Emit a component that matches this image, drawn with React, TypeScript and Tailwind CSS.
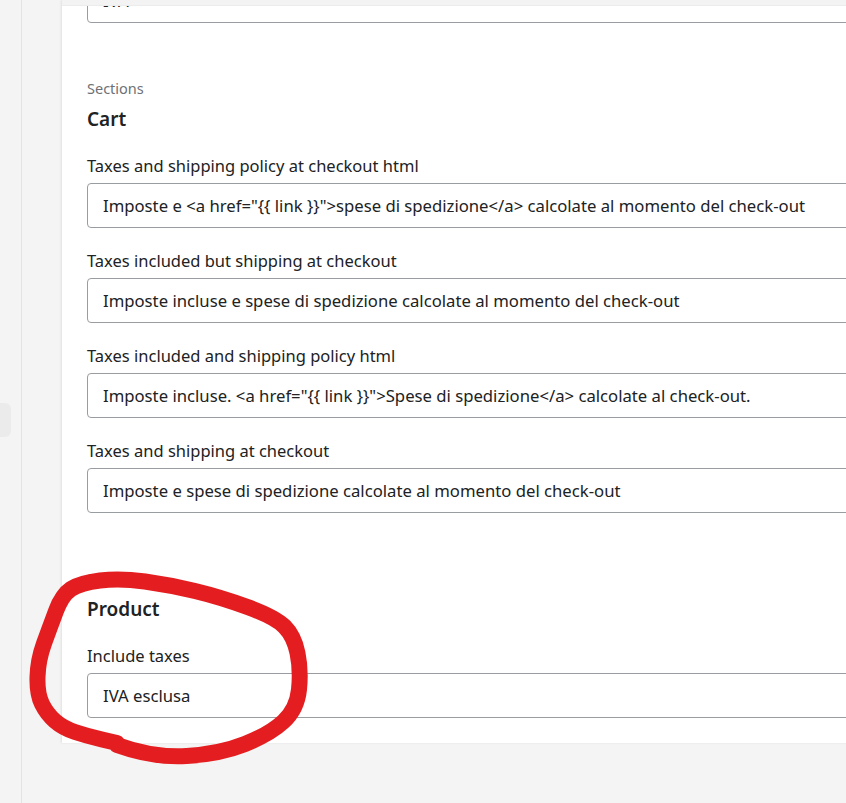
const font = { fontFamily: '"Noto Sans", "Open Sans", sans-serif' };

type Field = { label: string; value: string };

const cartFields: Field[] = [
  {
    label: "Taxes and shipping policy at checkout html",
    value: 'Imposte e <a href="{{ link }}">spese di spedizione</a> calcolate al momento del check-out',
  },
  {
    label: "Taxes included but shipping at checkout",
    value: "Imposte incluse e spese di spedizione calcolate al momento del check-out",
  },
  {
    label: "Taxes included and shipping policy html",
    value: 'Imposte incluse. <a href="{{ link }}">Spese di spedizione</a> calcolate al check-out.',
  },
  {
    label: "Taxes and shipping at checkout",
    value: "Imposte e spese di spedizione calcolate al momento del check-out",
  },
];

function TextField({ label, value }: Field) {
  return (
    <div className="flex flex-col gap-[5px]">
      <label className="h-6 leading-6 text-[16.5px] text-[#202223]">{label}</label>
      <div className="h-[45px] flex items-center pl-[15px] border border-[#999ca0] rounded-[4px] text-[16.7px] text-[#202223] whitespace-nowrap overflow-hidden">
        {value}
      </div>
    </div>
  );
}

function Section({ title, fields }: { title: string; fields: Field[] }) {
  return (
    <div className="flex flex-col">
      <p className="h-5 leading-5 text-[14.5px] text-[#6d7175]">Sections</p>
      <h2 className="mt-[9px] h-6 leading-6 text-[19px] font-semibold text-[#202223]">{title}</h2>
      <div className="mt-[23px] flex flex-col gap-[21px]">
        {fields.map((f) => (
          <TextField key={f.label} {...f} />
        ))}
      </div>
    </div>
  );
}

// hand-drawn red marker loop around the Product section
const loop: [number, number][] = [
  [117, 745], [153, 758], [220, 754], [270, 734], [297, 709], [301, 670],
  [294, 636], [275, 617], [220, 597], [170, 585], [120, 578], [80, 583],
  [62, 595], [50, 627], [38, 660], [37, 694], [47, 714], [63, 728],
  [87, 736], [117, 743],
];

function smoothPath(pts: [number, number][]) {
  let d = `M ${pts[0][0]} ${pts[0][1]}`;
  for (let i = 1; i < pts.length - 1; i++) {
    const [x, y] = pts[i];
    const [nx, ny] = pts[i + 1];
    d += ` Q ${x} ${y} ${(x + nx) / 2} ${(y + ny) / 2}`;
  }
  const last = pts[pts.length - 1];
  d += ` L ${last[0]} ${last[1]}`;
  return d;
}

export default function App() {
  return (
    <div className="relative w-[846px] h-[803px] overflow-hidden bg-[#f4f4f4] flex" style={font}>
      {/* left rail */}
      <div className="w-[22px] shrink-0 border-r border-[#e3e3e3] relative">
        <div className="absolute left-0 top-[403px] w-[11px] h-[34px] rounded-r-[6px] bg-[#ebebeb]" />
      </div>
      <div className="w-[40px] shrink-0" />

      {/* settings card */}
      <div className="flex flex-col shrink-0">
        <div className="w-[820px] h-[743px] bg-white shadow-[-1px_0_2px_rgba(0,0,0,0.08)] px-[25px] flex flex-col overflow-hidden relative">
          <div className="absolute top-0 left-0 right-0 h-[6px] bg-[#f3f3f3] border-b border-[#ececec] z-10" />
          <div className="mt-[-22px] h-[45px] flex items-center pl-[15px] border border-[#999ca0] rounded-[4px] text-[16.7px] text-[#202223]">
            IVA
          </div>
          <div className="mt-[55px]">
            <Section title="Cart" fields={cartFields} />
          </div>
          <div className="mt-[55px]">
            <Section title="Product" fields={[{ label: "Include taxes", value: "IVA esclusa" }]} />
          </div>
        </div>
      </div>

      <svg className="absolute inset-0 pointer-events-none" width="846" height="803">
        <path
          d={smoothPath(loop)}
          fill="none"
          stroke="#e41e20"
          strokeWidth="16"
          strokeLinecap="round"
          strokeLinejoin="round"
        />
      </svg>
    </div>
  );
}
